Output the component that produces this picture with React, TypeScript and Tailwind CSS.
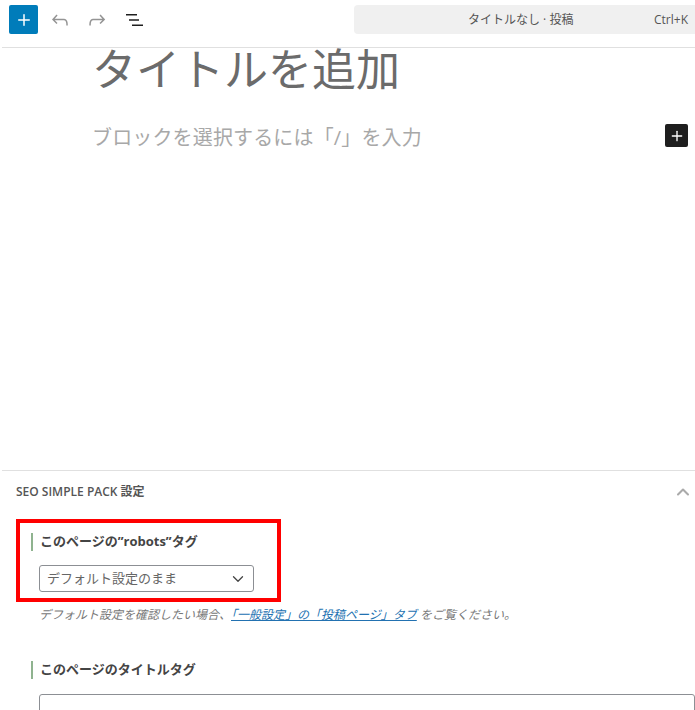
import { ChevronDown, ChevronUp, Plus } from "lucide-react";

const jp = "font-['Open_Sans','Noto_Sans_CJK_JP',sans-serif]";

function UndoIcon() {
  return (
    <svg width="24" height="24" viewBox="0 0 24 24" fill="#949494">
      <path d="M18.3 11.7c-.6-.6-1.4-.9-2.3-.9H6.7l2.9-3.3-1.1-1-4.5 5L8.5 16l1-1-2.7-2.7H16c.5 0 .9.2 1.3.5 1 1 1 3.4 1 4.5v.3h1.5v-.2c0-1.5 0-4.3-1.5-5.7z" />
    </svg>
  );
}

function RedoIcon() {
  return (
    <svg width="24" height="24" viewBox="0 0 24 24" fill="#949494">
      <path d="M15.6 6.5l-1.1 1 2.9 3.3H8c-.9 0-1.7.3-2.3.9-1.4 1.5-1.4 4.2-1.4 5.6v.2h1.5v-.3c0-1.1 0-3.5 1-4.5.3-.3.7-.5 1.3-.5h9.2L14.5 15l1.1 1.1 4.6-4.6-4.6-5z" />
    </svg>
  );
}

function ListViewIcon() {
  return (
    <svg width="17" height="12" viewBox="0 0 17 12" fill="none" stroke="#1e1e1e" strokeWidth="1.5">
      <path d="M0 .75h11M3 6h10M6 11.25h11" />
    </svg>
  );
}

function FieldLabel({ children }: { children: string }) {
  return (
    <div className="border-l-2 border-[#8fb38f] pl-[7px] h-[18px] flex items-center text-[13px] font-bold text-[#444]">
      {children}
    </div>
  );
}

export default function App() {
  return (
    <div className={`relative w-[695px] h-[710px] overflow-hidden bg-white ${jp}`}>
      <header className="ml-[2px] h-[48px] border-b border-[#e0e0e0] flex items-center pl-[7px] pb-[8px]">
        <button className="w-[29px] h-[29px] rounded-[2px] bg-[#007cba] flex items-center justify-center">
          <Plus size={18} strokeWidth={2} className="text-white" />
        </button>
        <div className="ml-[10px]">
          <UndoIcon />
        </div>
        <div className="ml-[13px]">
          <RedoIcon />
        </div>
        <div className="ml-[17px]">
          <ListViewIcon />
        </div>
        <div className="ml-[211px] w-[341px] h-[29px] rounded-l-[4px] bg-[#f0f0f0] flex items-center pr-[7px] text-[12px] text-[#555]">
          <span className="ml-[114px]">タイトルなし · 投稿</span>
          <span className="ml-auto">Ctrl+K</span>
        </div>
      </header>

      <main className="h-[424px] pl-[92px] pr-[7px]">
        <h1 className="-mt-[2px] text-[44px] leading-[46px] text-[#6b6b6b]">タイトルを追加</h1>
        <div className="mt-[32px] flex items-start justify-between">
          <p className="pt-px text-[20px] leading-[26px] tracking-[0.15px] text-[#a8a8a8]">ブロックを選択するには「/」を入力</p>
          <button className="w-[23px] h-[23px] rounded-[2px] bg-[#1e1e1e] flex items-center justify-center">
            <Plus size={16} strokeWidth={2} className="text-white" />
          </button>
        </div>
      </main>

      <section className="ml-[2px] border-t border-[#e0e0e0]">
        <div className="h-[41px] flex items-center justify-between pl-[14px] pr-[2px]">
          <h2 className="text-[12px] font-semibold text-[#555]">SEO SIMPLE PACK 設定</h2>
          <ChevronUp size={20} strokeWidth={2.5} className="text-[#aaa]" />
        </div>
        <div className="pl-[29px] pt-[21px]">
          <FieldLabel>このページの”robots”タグ</FieldLabel>
          <div className="ml-[8px] mt-[14px] w-[215px] h-[27px] border border-[#8c8f94] rounded-[3px] flex items-center justify-between pl-[7px] pr-[6px] text-[13px] text-[#666]">
            <span>デフォルト設定のまま</span>
            <ChevronDown size={18} strokeWidth={1.75} className="text-[#444]" />
          </div>
          <p className="ml-[8px] mt-[14px] text-[12px] leading-[18px] italic text-[#777]">
            デフォルト設定を確認したい場合、
            <a className="text-[#2271b1] underline">「一般設定」の「投稿ページ」タブ</a> をご覧ください。
          </p>
          <div className="mt-[37px]">
            <FieldLabel>このページのタイトルタグ</FieldLabel>
          </div>
          <div className="ml-[8px] mt-[15px] h-[40px] border border-[#8c8f94] rounded-[3px]" />
        </div>
      </section>

      <div className="absolute left-[16px] top-[519px] w-[265px] h-[83px] border-4 border-[#ff0000]" />
    </div>
  );
}
